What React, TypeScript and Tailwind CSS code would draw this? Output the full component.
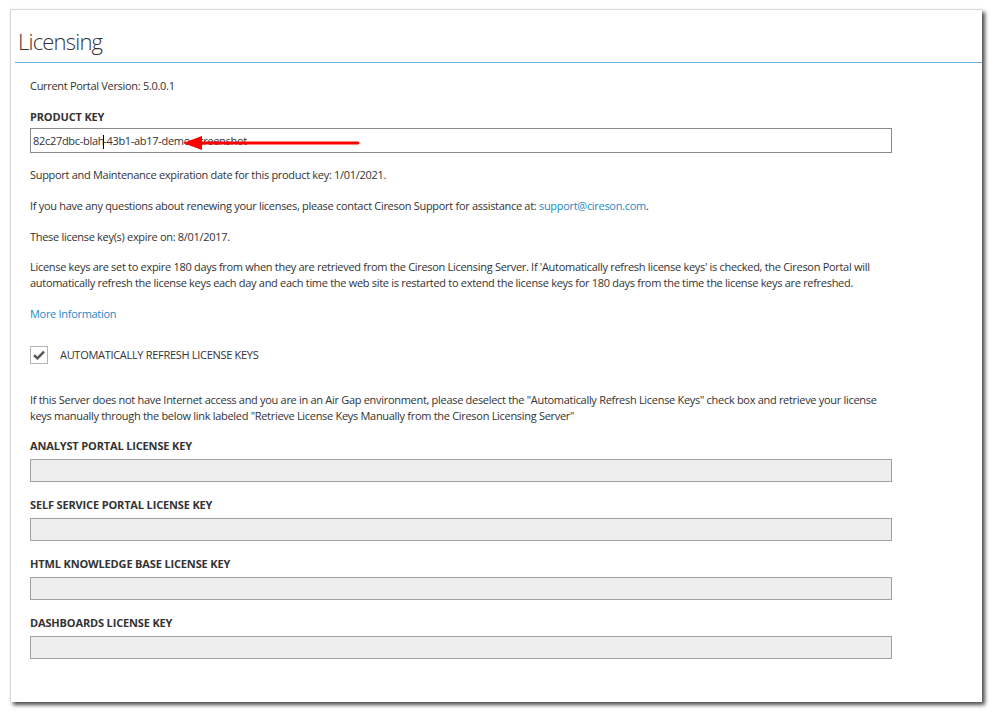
import React from 'react'

const font = { fontFamily: '"Open Sans", "Noto Sans", sans-serif' }

function KeyField({ label }: { label: string }) {
  return (
    <div className="mt-[15px]">
      <div className="h-[16px] leading-[16px] text-[11px] font-bold tracking-[-0.15px] text-[#333]">{label}</div>
      <div className="mt-[5px] h-[23px] w-[862px] border border-[#a0a0a0] bg-[#eeeeee]" />
    </div>
  )
}

export default function App() {
  return (
    <div className="w-[1000px] h-[720px] bg-white pt-[9px] pl-[10px]" style={font}>
      <div className="relative w-[972px] h-[693px] bg-white border-l border-t border-[#d8d8d8] shadow-[3px_3px_4px_rgba(0,0,0,0.7)]">
        {/* Header */}
        <div className="pl-[7px] pt-[16px] h-[52px] text-[22px] leading-[30px] font-light tracking-[-0.8px] text-[#333]">
          Licensing
        </div>
        <div className="ml-[4px] border-b border-[#6ab0de]" />

        <div className="pl-[19px] text-[11px] leading-[16px] tracking-[-0.3px] text-[#333]">
          <div className="mt-[15px]">Current Portal Version: 5.0.0.1</div>

          <div className="mt-[15px] font-bold tracking-[-0.15px]">PRODUCT KEY</div>
          <div className="relative mt-[3px] h-[25px] w-[862px] border border-[#8a8a8a] bg-white pl-[2px] leading-[23px] text-[#333]">
            82c27dbc-blah<span className="inline-block w-px h-[14px] bg-black align-middle -mx-px" />-43b1-ab17-demo-screenshot
            {/* red arrow annotation */}
            <svg className="absolute left-[150px] top-[6px]" width="180" height="16" viewBox="0 0 180 16">
              <line x1="16" y1="8" x2="177" y2="8" stroke="#ff0000" strokeWidth="3" strokeLinecap="round" />
              <polygon points="2,8 21,1 21,15" fill="#ff0000" />
            </svg>
          </div>

          <div className="mt-[14px]">Support and Maintenance expiration date for this product key: 1/01/2021.</div>
          <div className="mt-[15px]">
            If you have any questions about renewing your licenses, please contact Cireson Support for assistance at:{' '}
            <span className="text-[#1e88c8]">support@cireson.com</span>.
          </div>
          <div className="mt-[15px]">These license key(s) expire on: 8/01/2017.</div>
          <p className="mt-[14px] w-[862px]">
            License keys are set to expire 180 days from when they are retrieved from the Cireson Licensing Server. If 'Automatically refresh license keys' is checked, the Cireson Portal will automatically refresh the license keys each day and each time the web site is restarted to extend the license keys for 180 days from the time the license keys are refreshed.
          </p>
          <div className="mt-[15px] text-[#1e88c8]">More Information</div>

          <div className="mt-[24px] flex items-center h-[18px]">
            <div className="w-[18px] h-[18px] border border-[#b5b5b5] bg-white flex items-center justify-center">
              <svg width="12" height="10" viewBox="0 0 12 10">
                <path d="M1 5.2 L4.4 8.4 L11 1.6" fill="none" stroke="#555" strokeWidth="2.4" />
              </svg>
            </div>
            <span className="ml-[12px] uppercase">Automatically Refresh License Keys</span>
          </div>

          <p className="mt-[28px] w-[862px]">
            If this Server does not have Internet access and you are in an Air Gap environment, please deselect the "Automatically Refresh License Keys" check box and retrieve your license keys manually through the below link labeled "Retrieve License Keys Manually from the Cireson Licensing Server"
          </p>

          <div className="-mt-[1px]">
            <KeyField label="ANALYST PORTAL LICENSE KEY" />
            <KeyField label="SELF SERVICE PORTAL LICENSE KEY" />
            <KeyField label="HTML KNOWLEDGE BASE LICENSE KEY" />
            <KeyField label="DASHBOARDS LICENSE KEY" />
          </div>
        </div>
      </div>
    </div>
  )
}
